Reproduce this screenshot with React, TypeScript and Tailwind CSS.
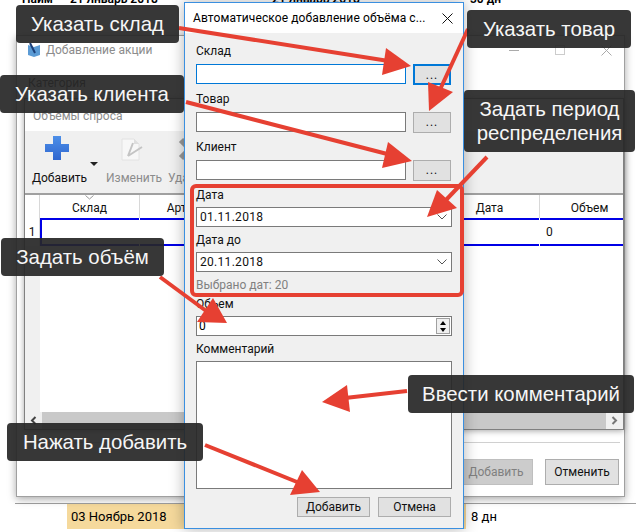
import type { ReactNode } from "react";

const dialogFont = "font-['Roboto',sans-serif]";

function Callout({ className, children }: { className: string; children: ReactNode }) {
  return (
    <div
      className={`absolute flex items-center justify-center rounded-[4px] bg-[#262626]/92 text-center font-['Liberation_Sans',sans-serif] text-[20.4px] leading-[24px] text-[#f6f6f6] ${className}`}
    >
      {children}
    </div>
  );
}

function Arrows() {
  const lines = [
    "179,28 395,62",
    "468,29 438,94",
    "186,102 395,156",
    "487,157 445,201",
    "160,277 213,316",
    "407,391 345,398",
    "205,445 302,484",
  ];
  const heads = [
    "411,66 386,48 382,75",
    "429,111 453,92 428,82",
    "412,161 388,142 382,168",
    "427,217 437,190 457,208",
    "227,323 197,322 213,298",
    "322,402 347,385 350,412",
    "320,492 302,470 290,495",
  ];
  return (
    <svg className="absolute left-0 top-0" width="636" height="532" viewBox="0 0 636 532">
      {lines.map((l) => (
        <polyline key={l} points={l} fill="none" stroke="#e64032" strokeWidth="4" />
      ))}
      {heads.map((h) => (
        <polygon key={h} points={h} fill="#e64032" />
      ))}
    </svg>
  );
}

function PickRow({ label, focused, gap }: { label: string; focused?: boolean; gap?: string }) {
  return (
    <div className={gap}>
      <div className="h-[16px] text-[12px] leading-[16px] text-[#111]">{label}</div>
      <div className="mt-[5px] flex h-[21px] items-start">
        <div className={`h-[20px] w-[210px] border bg-white ${focused ? "border-[#0078d7]" : "border-[#7a7a7a]"}`} />
        <button
          className={`ml-[7px] h-[21px] w-[38px] bg-[#e1e1e1] text-[12px] leading-[19px] tracking-[1px] text-[#111] ${
            focused ? "border-2 border-[#0078d7]" : "border border-[#adadad]"
          }`}
        >
          ...
        </button>
      </div>
    </div>
  );
}

function DateRow({ label, value, gap }: { label: string; value: string; gap: string }) {
  return (
    <div className={gap}>
      <div className="h-[16px] text-[12px] leading-[16px] text-[#111]">{label}</div>
      <div className="mt-[4px] flex h-[20px] items-center justify-between border border-[#7a7a7a] bg-white pl-[3px] pr-[3px] text-[12px] tracking-[0.3px] text-[#111]">
        <span>{value}</span>
        <svg width="12" height="8" viewBox="0 0 12 8">
          <path d="M1.5 1.5 6 6l4.5-4.5" fill="none" stroke="#555" strokeWidth="1" />
        </svg>
      </div>
    </div>
  );
}

function Dialog() {
  return (
    <div className={`absolute left-[184px] top-[2px] flex h-[527px] w-[280px] flex-col border border-[#3a8fe0] bg-[#f0f0f0] shadow-[0_0_14px_rgba(0,0,0,0.3)] ${dialogFont}`}>
      <div className="flex h-[30px] items-center justify-between bg-white pl-[8px] pr-[10px] text-[12px] tracking-[0.1px] text-black">
        <span>Автоматическое добавление объёма с...</span>
        <svg width="11" height="11" viewBox="0 0 11 11">
          <path d="M.5.5l10 10M10.5.5l-10 10" stroke="#111" strokeWidth="1" />
        </svg>
      </div>
      <div className="flex flex-1 flex-col px-[11px]">
        <PickRow label="Склад" focused gap="mt-[10px]" />
        <PickRow label="Товар" gap="mt-[6px]" />
        <PickRow label="Клиент" gap="mt-[6px]" />
        <DateRow label="Дата" value="01.11.2018" gap="mt-[6px]" />
        <DateRow label="Дата до" value="20.11.2018" gap="mt-[5px]" />
        <div className="mt-[5px] h-[16px] text-[12px] leading-[16px] text-[#808080]">Выбрано дат: 20</div>
        <div className="mt-[3px] h-[16px] text-[12px] leading-[16px] text-[#111]">Объем</div>
        <div className="mt-[4px] flex h-[20px] items-center justify-between border border-[#7a7a7a] bg-white pl-[2px] pr-[1px] text-[12px] text-black">
          <span>0</span>
          <div className="flex h-[16px] w-[14px] flex-col items-center justify-around border border-[#a0a0a0] bg-[#f0f0f0]">
            <span className="h-0 w-0 border-x-[3px] border-b-[4px] border-x-transparent border-b-black" />
            <span className="h-0 w-0 border-x-[3px] border-t-[4px] border-x-transparent border-t-black" />
          </div>
        </div>
        <div className="mt-[5px] h-[16px] text-[12px] leading-[16px] text-[#111]">Комментарий</div>
        <div className="mt-[4px] h-[128px] border border-[#7a7a7a] bg-white" />
        <div className="mt-[8px] flex justify-end gap-[8px] pr-px text-[12px] text-[#111]">
          <button className="h-[20px] w-[73px] border border-[#adadad] bg-[#e1e1e1] leading-[18px]">Добавить</button>
          <button className="h-[20px] w-[73px] border border-[#adadad] bg-[#e1e1e1] leading-[18px]">Отмена</button>
        </div>
      </div>
    </div>
  );
}

function Toolbar() {
  return (
    <div className="flex h-[62px] bg-[#f0f0f0] text-[12px]">
      <div className="relative ml-[7px] w-[50px] text-[#111]">
        <svg className="absolute left-[13px] top-[5px]" width="24" height="24" viewBox="0 0 24 24">
          <defs>
            <linearGradient id="plusFill" x1="0" y1="0" x2="0" y2="1">
              <stop offset="0" stopColor="#4d8fe8" />
              <stop offset="1" stopColor="#2f66cf" />
            </linearGradient>
          </defs>
          <path d="M8 0h8v8h8v8h-8v8H8v-8H0V8h8z" fill="url(#plusFill)" />
        </svg>
        <span className="absolute left-[58px] top-[31px] h-0 w-0 border-x-[4px] border-t-[4px] border-x-transparent border-t-[#222]" />
        <span className="absolute left-0 top-[38px]">Добавить</span>
      </div>
      <div className="relative ml-[24px] w-[50px] text-[#8c8c8c]">
        <svg className="absolute left-[14px] top-[6px]" width="24" height="25" viewBox="0 0 24 25">
          <path d="M2 2h12l5 5v16H2z" fill="#f7f7f7" stroke="#e2e2e2" />
          <path d="M14 2v5h5" fill="#dedede" />
          <path d="M8 19 13 6M8 19l14-9" stroke="#c4c4c4" strokeWidth="2" fill="none" />
        </svg>
        <span className="absolute left-0 top-[38px]">Изменить</span>
      </div>
      <div className="relative ml-[12px] w-[50px] text-[#8c8c8c]">
        <svg className="absolute left-[10px] top-[6px]" width="24" height="24" viewBox="0 0 24 24">
          <path d="M3 3l18 18M21 3L3 21" stroke="#9a9a9a" strokeWidth="6" />
        </svg>
        <span className="absolute left-0 top-[38px]">Удалить</span>
      </div>
    </div>
  );
}

function DemandTable() {
  const columns = ["Склад", "Артикул", "Товар", "Клиент", "Дата", "Объем"];
  return (
    <div className="relative flex-1 overflow-hidden border-t-2 border-[#a0a0a0] bg-white text-[12px] text-[#111]">
      <div className="flex h-[23px]">
        <div className="w-[15px] shrink-0 border-r border-[#d8d8d8]" />
        {columns.map((c, i) => (
          <div key={c} className="relative flex w-[100px] shrink-0 items-center justify-center border-r border-[#d8d8d8] pt-[2px]">
            {i === 0 && (
              <svg className="absolute left-[45px] top-0" width="9" height="5" viewBox="0 0 9 5">
                <path d="M.5.5l4 3.5 4-3.5" fill="none" stroke="#9a9a9a" />
              </svg>
            )}
            {c}
          </div>
        ))}
      </div>
      <div className="flex h-[28px]">
        <div className="flex w-[15px] shrink-0 items-center justify-center border-r border-[#d8d8d8]">1</div>
        {columns.map((c, i) => (
          <div
            key={c}
            className={`mr-px flex w-[99px] shrink-0 items-center border-y-2 border-[#0000e6] pl-[6px] ${i === 0 ? "border-l-2" : ""}`}
          >
            {c === "Объем" ? "0" : ""}
          </div>
        ))}
      </div>
      <div className="absolute bottom-0 left-0 top-[51px] w-[15px] bg-[#f0f0f0]" />
    </div>
  );
}

function BackWindow() {
  return (
    <div className={`absolute left-[16px] top-[35px] flex h-[462px] w-[609px] flex-col border border-[#a0a0a0] bg-white pb-[10px] shadow-[0_2px_8px_rgba(0,0,0,0.35)] ${dialogFont}`}>
      <div className="flex h-[28px] items-center pl-[11px] text-[12px] text-[#8c8c8c]">
        <svg width="12" height="14" viewBox="0 0 12 14">
          <path d="M0 2l6 2 6-2v10l-6 2-6-2z" fill="#5b9bd5" />
          <path d="M2 0l5 10" stroke="#1c3f78" strokeWidth="2" />
        </svg>
        <span className="ml-[6px]">Добавление акции</span>
        <div className="ml-auto flex items-center gap-[36px] pr-[12px]">
          <span className="h-px w-[10px] bg-[#aaa]" />
          <span className="h-[10px] w-[10px] border border-[#ccc]" />
          <svg width="11" height="11" viewBox="0 0 11 11">
            <path d="M.5.5l10 10M10.5.5l-10 10" stroke="#aaa" />
          </svg>
        </div>
      </div>
      <div className="mt-[11px] pl-[11px] text-[12px] leading-[16px] text-[#333]">Категория</div>
      <div className="ml-[7px] mt-[7px] flex h-[332px] w-[600px] flex-col border border-[#808080] bg-white shadow-[0_1px_6px_rgba(0,0,0,0.35)]">
        <div className="flex h-[32px] items-center pl-[8px] pt-[2px] text-[12px] text-[#8c8c8c]">Объёмы спроса</div>
        <Toolbar />
        <DemandTable />
        <div className="flex h-[17px] items-center justify-between bg-[#c9c9c9] text-[#444]">
          <span className="flex h-full w-[17px] items-center justify-center bg-[#f0f0f0]">
            <svg width="7" height="9" viewBox="0 0 7 9"><path d="M5.5 1 2 4.5 5.5 8" fill="none" stroke="#444" strokeWidth="2" /></svg>
          </span>
          <span className="flex h-full w-[17px] items-center justify-center bg-[#f0f0f0]">
            <svg width="7" height="9" viewBox="0 0 7 9"><path d="M1.5 1 5 4.5 1.5 8" fill="none" stroke="#777" strokeWidth="2" /></svg>
          </span>
        </div>
      </div>
      <div className="ml-auto mr-[4px] mt-[12px] h-px w-[590px] bg-[#d0d0d0]" />
      <div className="mt-[16px] flex justify-end gap-[12px] pr-[5px] text-[12px]">
        <button className="h-[26px] w-[74px] border border-[#bfbfbf] bg-[#cccccc] text-[#808080]">Добавить</button>
        <button className="h-[26px] w-[74px] border border-[#adadad] bg-[#e1e1e1] text-[#111]">Отменить</button>
      </div>
    </div>
  );
}

export default function App() {
  return (
    <div className="relative h-[532px] w-[636px] overflow-hidden bg-white font-['Roboto',sans-serif] text-black">
      {/* list behind the windows */}
      <div className="absolute left-[22px] top-[-10px] flex text-[12px] font-semibold">
        <span className="w-[48px]">Наим</span>
        <span className="w-[202px]">21 Январь 2018</span>
        <span className="w-[198px]">21 Январь 2018</span>
        <span>30 дн</span>
      </div>
      <div className="absolute bottom-[3px] left-[15px] right-0 flex h-[26px] border-t border-[#a0a0a0] text-[13px]">
        <div className="ml-[52px] flex w-[399px] items-center bg-[#f5d99c] pl-[4px]">03 Ноябрь 2018</div>
        <div className="flex items-center pl-[5px]">8 дн</div>
      </div>

      <BackWindow />
      <Dialog />

      <div className="absolute left-[190px] top-[184px] h-[113px] w-[274px] rounded-[6px] border-4 border-[#e64032]" />
      <Arrows />

      <Callout className="left-[16px] top-[5px] h-[38px] w-[163px]">Указать склад</Callout>
      <Callout className="left-0 top-[75px] h-[38px] w-[184px]">Указать клиента</Callout>
      <Callout className="left-[1px] top-[238px] h-[38px] w-[163px]">Задать объём</Callout>
      <Callout className="left-[467px] top-[10px] h-[38px] w-[164px]">Указать товар</Callout>
      <Callout className="left-[464px] top-[90px] h-[62px] w-[171px]">
        Задать период
        <br />
        респределения
      </Callout>
      <Callout className="left-[408px] top-[375px] h-[38px] w-[226px]">Ввести комментарий</Callout>
      <Callout className="left-[7px] top-[423px] h-[38px] w-[196px]">Нажать добавить</Callout>
    </div>
  );
}
